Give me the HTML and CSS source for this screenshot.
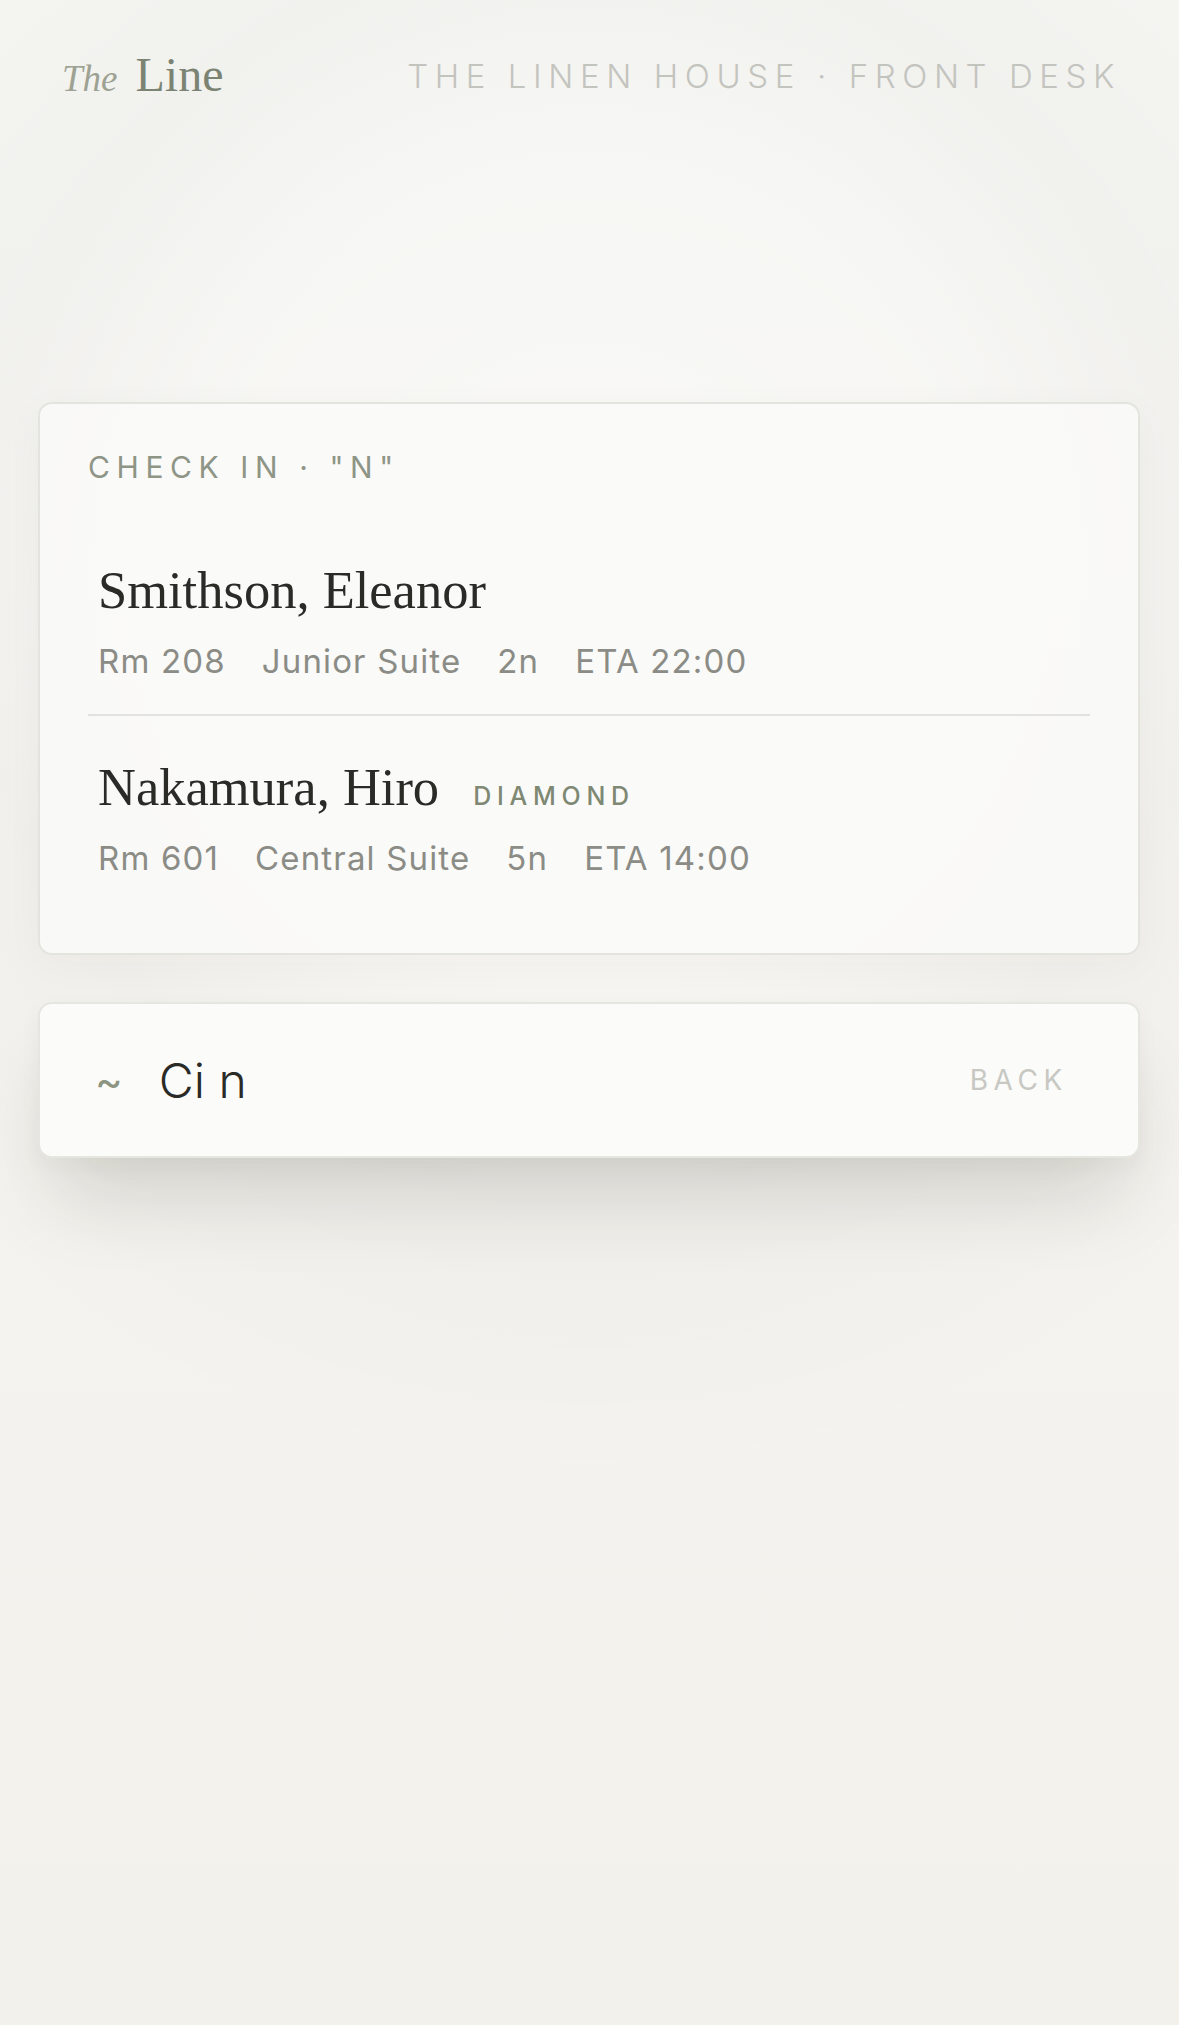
FILE: index.html
```html
<!DOCTYPE html>
<html lang="en">
<head>
<meta charset="utf-8">
<title>The Line · Front Desk</title>
<link rel="stylesheet" href="styles.css">
</head>
<body>
<div class="page">
  <header class="topbar">
    <div class="logo"><span class="logo-the">The</span><span class="logo-line">Line</span></div>
    <div class="venue">THE LINEN HOUSE · FRONT DESK</div>
  </header>

  <main class="main">
    <section class="results">
      <div class="results-label">CHECK IN · "N"</div>
      <div class="guest guest-first">
        <div class="guest-name-row">
          <span class="guest-name">Smithson, Eleanor</span>
        </div>
        <div class="guest-meta">
          <span>Rm 208</span><span>Junior Suite</span><span>2n</span><span>ETA 22:00</span>
        </div>
      </div>
      <div class="guest">
        <div class="guest-name-row">
          <span class="guest-name">Nakamura, Hiro</span>
          <span class="tier">DIAMOND</span>
        </div>
        <div class="guest-meta">
          <span>Rm 601</span><span>Central Suite</span><span>5n</span><span>ETA 14:00</span>
        </div>
      </div>
    </section>

    <section class="command">
      <span class="command-tilde">~</span>
      <span class="command-text">Ci n</span>
      <span class="command-back">BACK</span>
    </section>
  </main>
</div>
</body>
</html>
```

FILE: styles.css
```css
html, body {
  margin: 0;
  padding: 0;
}

body {
  min-height: 2025px;
  font-family: "Inter", "Liberation Sans", sans-serif;
  background:
    radial-gradient(circle at 589px 568px, rgba(255,255,255,0.4) 0, rgba(255,255,255,0.18) 380px, rgba(0,0,0,0.018) 620px, rgba(0,0,0,0.012) 760px, rgba(0,0,0,0) 920px),
    linear-gradient(180deg, #f6f6f3 0%, #f5f4f0 45%, #f3f1ec 100%);
}

.page {
  min-height: 2025px;
}

.topbar {
  display: flex;
  align-items: center;
  justify-content: space-between;
  padding: 48px 58px 0 62px;
  height: 56px;
}

.logo {
  font-family: "Liberation Serif", "DejaVu Serif", serif;
  line-height: 56px;
  white-space: nowrap;
  margin-top: 8px;
}

.logo-the {
  font-style: italic;
  font-size: 37px;
  color: #9da293;
  margin-right: 18px;
}

.logo-line {
  font-size: 48px;
  color: #7b8373;
}

.venue {
  font-size: 33px;
  font-weight: 300;
  letter-spacing: 0.2em;
  line-height: 40px;
  color: #c4c4bf;
  white-space: nowrap;
}

.main {
  padding: 298px 39px 0 38px;
  display: flex;
  flex-direction: column;
  gap: 47px;
}

.results {
  border: 2px solid #e4e4df;
  border-radius: 14px;
  background: rgba(250, 250, 248, 0.92);
  padding: 45px 48px 42px;
  box-shadow: 0 8px 40px rgba(60, 60, 40, 0.035);
}

.results-label {
  font-size: 30px;
  font-weight: 400;
  letter-spacing: 0.22em;
  line-height: 36px;
  color: #8e9586;
  margin-bottom: 35px;
}

.guest {
  padding: 41px 10px 33px;
}

.guest-first {
  padding-top: 40px;
  border-bottom: 2px solid #e3e3de;
}

.guest-name-row {
  display: flex;
  align-items: baseline;
  gap: 34px;
}

.guest-name {
  font-family: "Liberation Serif", "DejaVu Serif", serif;
  font-size: 52.5px;
  line-height: 60px;
  color: #2a2a27;
}

.tier {
  font-size: 25px;
  font-weight: 500;
  letter-spacing: 0.23em;
  color: #7e8873;
}

.guest-meta {
  display: flex;
  gap: 36px;
  margin-top: 21px;
  font-size: 33px;
  line-height: 40px;
  letter-spacing: 0.035em;
  color: #8b8c86;
}

.command {
  display: flex;
  align-items: center;
  height: 152px;
  border: 2px solid #e6e6e1;
  border-radius: 14px;
  background: #fbfbf9;
  padding: 0 70px 0 55px;
  box-shadow: 0 56px 80px -18px rgba(40, 40, 30, 0.15), 0 8px 22px rgba(40, 40, 30, 0.04);
}

.command-tilde {
  font-size: 42px;
  color: #8c9482;
  margin-right: 36px;
}

.command-text {
  font-size: 48px;
  font-weight: 300;
  color: #2a2a27;
  flex: 1;
}

.command-back {
  font-size: 28px;
  font-weight: 400;
  letter-spacing: 0.2em;
  color: #c8c8c3;
}
```
